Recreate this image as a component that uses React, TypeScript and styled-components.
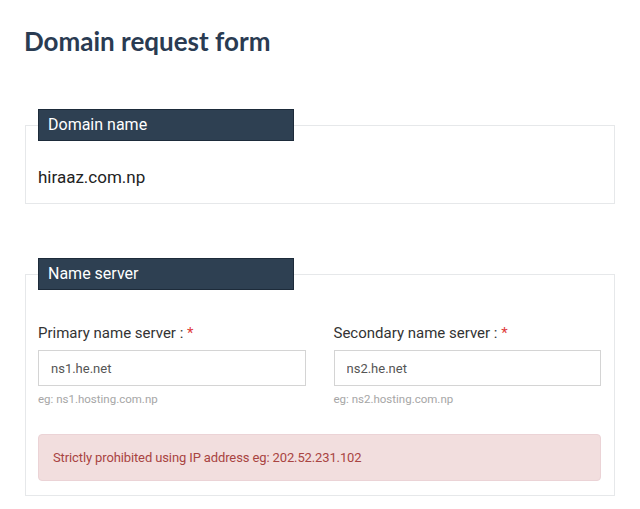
import styled, { createGlobalStyle } from "styled-components";

const GlobalStyle = createGlobalStyle`
  body {
    margin: 0;
    background: #ffffff;
    font-family: Roboto, "Liberation Sans", sans-serif;
    color: #333333;
  }
`;

const Page = styled.div`
  padding: 24px 25px 12px;
`;

const Title = styled.h1`
  margin: 0 0 51px -1px;
  font-family: "Lato", "DejaVu Sans", sans-serif;
  font-size: 26px;
  line-height: 34px;
  font-weight: 700;
  color: #2a3b52;
`;

const Section = styled.fieldset<{ $gap?: number }>`
  margin: 0 0 ${({ $gap }) => $gap ?? 0}px;
  padding: 0 13px 14px 12px;
  border: 1px solid #e6e8ea;
  min-width: 0;
`;

const Legend = styled.legend`
  box-sizing: border-box;
  width: 256px;
  height: 32px;
  padding: 0 9px;
  line-height: 30px;
  font-size: 16px;
  color: #ffffff;
  background: #2e4052;
  border: 1px solid #1d2b3a;
`;

const DomainValue = styled.div`
  margin: 26px 0 2px;
  font-size: 17px;
  line-height: 20px;
  color: #222222;
`;

const Columns = styled.div`
  display: grid;
  grid-template-columns: 1fr 1fr;
  column-gap: 28px;
  margin-top: 33px;
`;

const Field = styled.div`
  display: flex;
  flex-direction: column;
`;

const Label = styled.label`
  font-size: 15px;
  line-height: 20px;
  color: #333333;
  margin-bottom: 7px;

  span {
    color: #e03b3b;
  }
`;

const Input = styled.input`
  box-sizing: border-box;
  height: 36px;
  padding: 0 12px;
  border: 1px solid #d4d4d4;
  font-family: Roboto, "Liberation Sans", sans-serif;
  font-size: 13px;
  color: #555555;
  outline: none;
`;

const Hint = styled.small`
  margin-top: 6px;
  font-size: 11.5px;
  line-height: 14px;
  color: #a6a6a6;
`;

const Alert = styled.div`
  margin-top: 28px;
  height: 47px;
  box-sizing: border-box;
  padding: 0 14px;
  display: flex;
  align-items: center;
  background: #f2dede;
  border: 1px solid #ebd3d6;
  border-radius: 4px;
  font-size: 13px;
  letter-spacing: -0.12px;
  color: #a94442;
`;

const servers = [
  { label: "Primary name server", value: "ns1.he.net", hint: "eg: ns1.hosting.com.np" },
  { label: "Secondary name server", value: "ns2.he.net", hint: "eg: ns2.hosting.com.np" },
];

export default function App() {
  return (
    <Page>
      <GlobalStyle />
      <Title>Domain request form</Title>

      <Section $gap={54}>
        <Legend>Domain name</Legend>
        <DomainValue>hiraaz.com.np</DomainValue>
      </Section>

      <Section>
        <Legend>Name server</Legend>
        <Columns>
          {servers.map((s) => (
            <Field key={s.label}>
              <Label>
                {s.label} : <span>*</span>
              </Label>
              <Input defaultValue={s.value} />
              <Hint>{s.hint}</Hint>
            </Field>
          ))}
        </Columns>
        <Alert>Strictly prohibited using IP address eg: 202.52.231.102</Alert>
      </Section>
    </Page>
  );
}
